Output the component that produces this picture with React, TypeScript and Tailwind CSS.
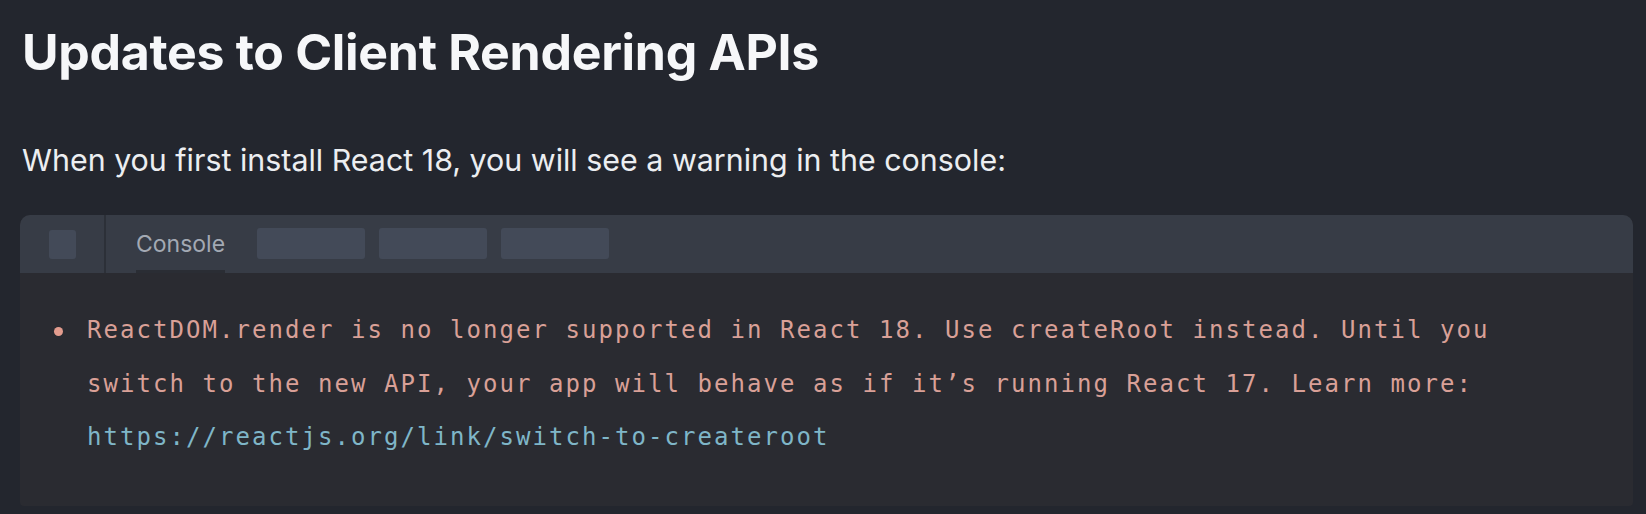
import React from 'react';

const warningLines = [
  'ReactDOM.render is no longer supported in React 18. Use createRoot instead. Until you',
  'switch to the new API, your app will behave as if it’s running React 17. Learn more:',
];

export default function App() {
  return (
    <div className="min-h-[514px] w-full bg-[#23262e] pl-[22px] pr-[13px] pt-[22px] pb-[7px] font-['Inter','Noto_Sans',sans-serif]">
      {/* Heading */}
      <h2 className="text-[50px] font-bold leading-[60px] text-[#f6f7f9] tracking-[-0.3px]">
        Updates to Client Rendering APIs
      </h2>

      <p className="mt-[59px] text-[30.4px] leading-[38px] text-[#eceef1]">
        When you first install React 18, you will see a warning in the console:
      </p>

      {/* Console block */}
      <div className="mt-[36px] ml-[-2px] overflow-hidden rounded-t-[10px] rounded-b-[4px] bg-[#2a2b31]">
        <div className="flex h-[58px] items-stretch bg-[#373c46]">
          <div className="flex w-[86px] items-start border-r-2 border-[#2c3038] pl-[29px] pt-[15px]">
            <span className="h-[29px] w-[27px] rounded-[3px] bg-[#434a58]"></span>
          </div>
          <div className="ml-[30px] flex h-full flex-col justify-center border-b-[3px] border-[#2a2d34] pt-[3px]">
            <span className="text-[23px] leading-[28px] text-[#a3a9b3]">Console</span>
          </div>
          <div className="ml-[32px] flex items-start gap-[14px] pt-[13px]">
            <span className="h-[31px] w-[108px] rounded-[3px] bg-[#434a58]"></span>
            <span className="h-[31px] w-[108px] rounded-[3px] bg-[#434a58]"></span>
            <span className="h-[31px] w-[108px] rounded-[3px] bg-[#434a58]"></span>
          </div>
        </div>

        <div className="flex pl-[34px] pt-[31px] pb-[41px] font-['DejaVu_Sans_Mono','Liberation_Mono',monospace] text-[24px] leading-[53.5px] tracking-[2.05px]">
          <div className="flex h-[53.5px] w-[33px] items-center pt-[1px]">
            <span className="h-[9px] w-[9px] rounded-full bg-[#e39c8e]"></span>
          </div>
          <div>
            {warningLines.map((line) => (
              <div key={line} className="whitespace-pre text-[#d9a097]">
                {line}
              </div>
            ))}
            <div className="whitespace-pre text-[#7fb6c8]">https://reactjs.org/link/switch-to-createroot</div>
          </div>
        </div>
      </div>
    </div>
  );
}
